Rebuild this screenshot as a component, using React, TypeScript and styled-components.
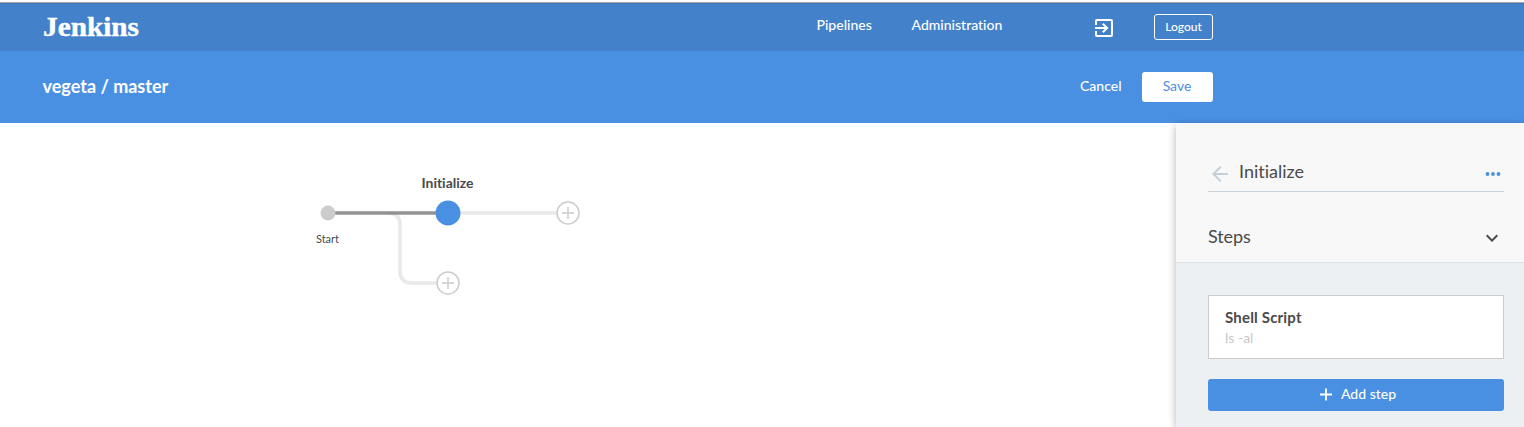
import React from 'react';
import styled, { createGlobalStyle } from 'styled-components';

const GlobalStyle = createGlobalStyle`
  * { box-sizing: border-box; }
  html, body { margin: 0; background: #fff; }
  body { font-family: Lato, sans-serif; font-variant-ligatures: none; color: #4a4a4a; overflow: hidden; }
  button { font-family: inherit; margin: 0; padding: 0; }
  svg { display: block; flex: none; }
`;

const Page = styled.div`
  display: flex;
  flex-direction: column;
  height: 427px;
  padding-top: 2px;
`;

const Header = styled.header`
  display: flex;
  align-items: flex-start;
  height: 49px;
  padding-left: 42px;
  border-top: 1px solid #a8a5a6;
  background: #4381cb;
  box-shadow: inset 0 1px 0 #3b74b9;
  color: #fff;
`;

const Logo = styled.svg`
  margin-top: 10px;
`;

const Nav = styled.nav`
  display: flex;
  gap: 39px;
  margin: 12px 0 0 674.5px;
`;

const NavLink = styled.a<{ $width: number }>`
  width: ${(p) => p.$width}px;
  font-size: 14px;
  font-weight: 500;
  line-height: 20px;
  white-space: nowrap;
`;

const ExitIcon = styled.svg`
  margin: 13px 0 0 89.5px;
`;

const LogoutButton = styled.button`
  width: 59px;
  height: 26px;
  margin: 11px 0 0 38px;
  border: 1px solid #fff;
  border-radius: 3px;
  background: transparent;
  color: #fff;
  font-size: 12px;
  font-weight: 500;
  line-height: 24px;
`;

const TitleBar = styled.div`
  display: flex;
  align-items: flex-start;
  height: 72px;
  padding-left: 42.5px;
  background: #4a90e2;
  color: #fff;
`;

const Title = styled.h1`
  width: 1037.5px;
  margin: 23px 0 0;
  font-size: 18px;
  font-weight: 700;
  line-height: 24px;
`;

const CancelLink = styled.a`
  width: 62px;
  margin-top: 25px;
  font-size: 14px;
  font-weight: 500;
  line-height: 20px;
`;

const SaveButton = styled.button`
  width: 71px;
  height: 30px;
  margin-top: 21px;
  padding: 0 1px 2px 0;
  border: 0;
  border-radius: 3px;
  background: #fff;
  color: #4a90e2;
  font-size: 14px;
  line-height: 26px;
`;

const Body = styled.main`
  display: flex;
  flex: 1;
  min-height: 0;
`;

const Canvas = styled.section`
  flex: 1;
`;

const Panel = styled.aside`
  display: flex;
  flex-direction: column;
  width: 348px;
  background: #ecf0f3;
  box-shadow: 0 2px 8px rgba(0, 0, 0, 0.3);
`;

const PanelTop = styled.div`
  height: 140px;
  padding: 32px 20px 0 32px;
  border-bottom: 1px solid #dde2e6;
  background: #f8f8f8;
`;

const PanelHeading = styled.div`
  display: flex;
  align-items: flex-start;
  height: 37px;
  border-bottom: 1px solid #c9d5de;
`;

const StageName = styled.h2`
  flex: 1;
  margin: 4px 0 0 7px;
  font-size: 18px;
  font-weight: 400;
  line-height: 24px;
`;

const ArrowIcon = styled.svg`
  margin-top: 7px;
`;

const DotsIcon = styled.svg`
  margin: 7px -1px 0 0;
`;

const SectionRow = styled.div`
  display: flex;
  align-items: center;
  justify-content: space-between;
  height: 24px;
  margin-top: 34px;
`;

const SectionName = styled.h3`
  margin: -4px 0 0;
  font-size: 18px;
  font-weight: 400;
  line-height: 24px;
  letter-spacing: -0.1px;
`;

const Steps = styled.div`
  display: flex;
  flex-direction: column;
  gap: 20px;
  padding: 32px 20px 0 32px;
`;

const StepCard = styled.div`
  height: 64px;
  padding: 11px 16px;
  border: 1px solid #ccc;
  background: #fff;
`;

const StepName = styled.div`
  font-size: 15px;
  font-weight: 700;
  line-height: 20px;
  letter-spacing: 0.18px;
`;

const StepDetail = styled.div`
  margin-top: 1px;
  color: #c8c8c8;
  font-size: 14px;
  line-height: 20px;
`;

const AddButton = styled.button`
  display: flex;
  align-items: center;
  justify-content: center;
  gap: 5px;
  height: 32px;
  border: 0;
  border-radius: 3px;
  background: #4a90e2;
  color: #fff;
  font-size: 14px;
  font-weight: 500;
`;

const AddLabel = styled.span`
  padding-bottom: 2px;
  line-height: 28px;
`;

const AddNode = ({ x, y }: { x: number; y: number }) => (
  <g fill="none" stroke="#ccc">
    <circle cx={x} cy={y} r="11" fill="#fff" strokeWidth="1.5" />
    <path d={`M${x - 6} ${y}h12M${x} ${y - 6}v12`} strokeWidth="1.5" />
  </g>
);

const PipelineGraph = () => (
  <svg width="700" height="220" viewBox="0 123 700 220" fontFamily="Lato, sans-serif" fill="#4a4a4a">
    <g fill="none" strokeWidth="3.5">
      <path d="M448 213H568" stroke="#e9e9e9" />
      <path d="M388 213Q400 213 400 225V271Q400 283 412 283H448" stroke="#e9e9e9" />
      <path d="M328 213H448" stroke="#949393" />
    </g>
    <circle cx="328" cy="213" r="7.5" fill="#ccc" />
    <circle cx="448" cy="213" r="12.5" fill="#4a90e2" />
    <AddNode x={568} y={213} />
    <AddNode x={448} y={283} />
    <text x="447.5" y="188" fontSize="14" fontWeight="700" textAnchor="middle" textLength="52">Initialize</text>
    <text x="327.5" y="243" fontSize="11" textAnchor="middle">Start</text>
  </svg>
);

export default function App() {
  return (
    <>
      <GlobalStyle />
      <Page>
        <Header>
          <Logo width="100" height="30" viewBox="0 0 100 30" fill="#fff">
            <text
              x="1"
              y="22.8"
              fontFamily="'Liberation Serif', serif"
              fontSize="26.5"
              fontWeight="700"
              textLength="96"
              lengthAdjust="spacingAndGlyphs"
              stroke="#fff"
              strokeWidth="0.4"
            >
              Jenkins
            </text>
          </Logo>
          <Nav>
            <NavLink $width={56}>Pipelines</NavLink>
            <NavLink $width={91}>Administration</NavLink>
          </Nav>
          <ExitIcon width="24" height="24" viewBox="0 0 24 24" fill="#fff">
            <path d="M10.09 15.59L11.5 17l5-5-5-5-1.41 1.41L12.67 11H3v2h9.67l-2.58 2.59zM19 3H5c-1.11 0-2 .9-2 2v4h2V5h14v14H5v-4H3v4c0 1.1.89 2 2 2h14c1.1 0 2-.9 2-2V5c0-1.1-.9-2-2-2z" />
          </ExitIcon>
          <LogoutButton>Logout</LogoutButton>
        </Header>
        <TitleBar>
          <Title>vegeta / master</Title>
          <CancelLink>Cancel</CancelLink>
          <SaveButton>Save</SaveButton>
        </TitleBar>
        <Body>
          <Canvas>
            <PipelineGraph />
          </Canvas>
          <Panel>
            <PanelTop>
              <PanelHeading>
                <ArrowIcon width="24" height="24" viewBox="0 0 24 24" fill="#c3d0d8">
                  <path d="M20 11H7.83l5.59-5.59L12 4l-8 8 8 8 1.41-1.41L7.83 13H20v-2z" />
                </ArrowIcon>
                <StageName>Initialize</StageName>
                <DotsIcon width="24" height="24" viewBox="0 0 24 24" fill="#4a90e2">
                  <circle cx="6.5" cy="12" r="1.9" />
                  <circle cx="12" cy="12" r="1.9" />
                  <circle cx="17.5" cy="12" r="1.9" />
                </DotsIcon>
              </PanelHeading>
              <SectionRow>
                <SectionName>Steps</SectionName>
                <svg width="24" height="24" viewBox="0 0 24 24" fill="#4a4a4a">
                  <path d="M16.59 8.59L12 13.17 7.41 8.59 6 10l6 6 6-6z" />
                </svg>
              </SectionRow>
            </PanelTop>
            <Steps>
              <StepCard>
                <StepName>Shell Script</StepName>
                <StepDetail>ls -al</StepDetail>
              </StepCard>
              <AddButton>
                <svg width="20" height="20" viewBox="0 0 20 20" fill="none" stroke="#fff" strokeWidth="1.8">
                  <path d="M4 9.5H16M10 3.5V15.5" />
                </svg>
                <AddLabel>Add step</AddLabel>
              </AddButton>
            </Steps>
          </Panel>
        </Body>
      </Page>
    </>
  );
}
